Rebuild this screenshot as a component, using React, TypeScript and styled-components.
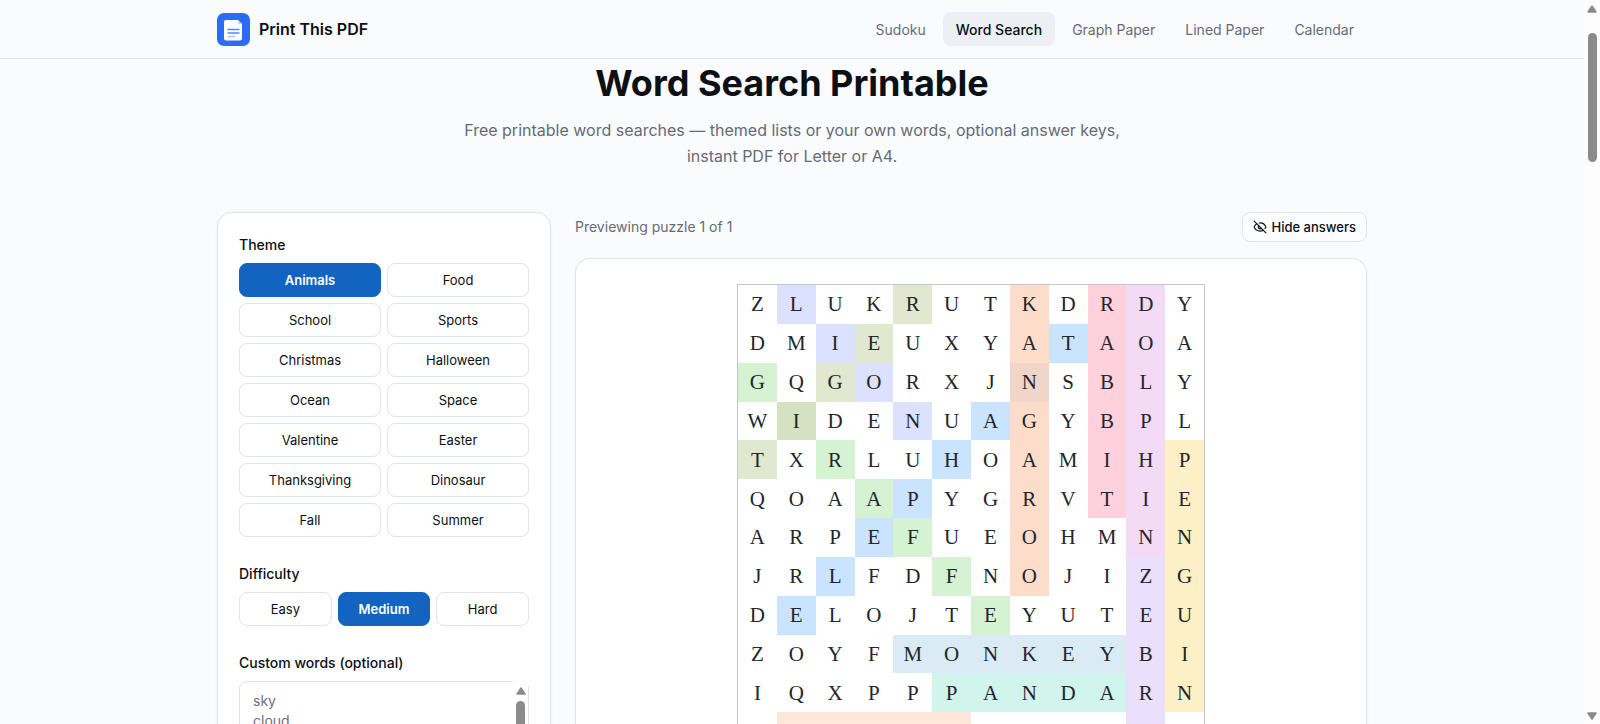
import React, { useState } from "react";
import styled, { createGlobalStyle, css } from "styled-components";
import { EyeOff } from "lucide-react";

const GlobalStyle = createGlobalStyle`
  *, *::before, *::after { box-sizing: border-box; }
  body {
    margin: 0;
    background: #fafbfd;
    color: #0c0f14;
    font-family: Inter, "Liberation Sans", sans-serif;
  }
  button, textarea { font: inherit; color: inherit; }
`;

const Shell = styled.div`
  display: flex;
  height: 100vh;
  overflow: hidden;
`;

const Page = styled.div`
  flex: 1;
  min-width: 0;
`;

const ScrollTrack = styled.div<{ $fill?: string }>`
  display: flex;
  flex-direction: column;
  align-items: center;
  flex: none;
  background: ${(p) => p.$fill ?? "transparent"};
`;

const PageTrack = styled(ScrollTrack)`
  width: 16px;
  padding: 5px 0 4px;
`;

const FieldTrack = styled(ScrollTrack)`
  position: absolute;
  top: 0;
  right: 1px;
  bottom: 1px;
  width: 15px;
  padding-top: 6px;
`;

const Thumb = styled.div<{ $height: number; $gap: number }>`
  width: 9px;
  height: ${(p) => p.$height}px;
  margin-top: ${(p) => p.$gap}px;
  border-radius: 5px;
  background: #8b8b8b;
`;

const DownArrow = styled.div`
  display: flex;
  margin-top: auto;
`;

const Container = styled.div`
  width: 100%;
  max-width: 1182px;
  margin: 0 auto;
  padding: 0 16px;
`;

const Header = styled.header`
  border-bottom: 1px solid #e1e5ea;
`;

const HeaderRow = styled(Container)`
  display: flex;
  align-items: center;
  justify-content: space-between;
  height: 58px;
`;

const Brand = styled.a`
  display: flex;
  align-items: center;
  gap: 9px;
  color: #0c0f14;
  font-size: 16px;
  font-weight: 600;
  line-height: 24px;
  text-decoration: none;
`;

const Nav = styled.nav`
  display: flex;
  gap: 4px;
`;

const NavLink = styled.a<{ $active?: boolean }>`
  padding: 7px 13px 6px;
  border-radius: 8px;
  font-size: 14px;
  line-height: 21px;
  text-decoration: none;
  color: #656b75;
  ${(p) =>
    p.$active &&
    css`
      background: #ecf0f5;
      color: #0c0f14;
      font-weight: 500;
    `}
`;

const Hero = styled.section`
  padding: 4px 0 43px;
  text-align: center;
`;

const Title = styled.h1`
  margin: 0;
  font-size: 36px;
  font-weight: 700;
  line-height: 40px;
`;

const Lead = styled.p`
  max-width: 680px;
  margin: 14px auto 0;
  color: #656b75;
  font-size: 16px;
  line-height: 26px;
`;

const Columns = styled.div`
  display: grid;
  grid-template-columns: 334px minmax(0, 1fr);
  gap: 24px;
  align-items: start;
`;

const Card = styled.div`
  border: 1px solid #dfe3e8;
  border-radius: 15px;
  background: #fff;
  box-shadow: 0 1px 3px rgba(15, 23, 42, 0.06);
`;

const Settings = styled(Card)`
  display: flex;
  flex-direction: column;
  gap: 26px;
  padding: 21px 21px 40px;
`;

const Field = styled.div`
  display: flex;
  flex-direction: column;
  gap: 8px;
`;

const Label = styled.label`
  font-size: 14px;
  font-weight: 500;
  line-height: 21px;
`;

const Options = styled.div<{ $columns: number }>`
  display: grid;
  grid-template-columns: repeat(${(p) => p.$columns}, 1fr);
  gap: 6px;
`;

const Option = styled.button<{ $selected: boolean }>`
  height: 34px;
  padding: 0;
  border: 1px solid ${(p) => (p.$selected ? "#1264c0" : "#e0e4e8")};
  border-radius: 8px;
  background: ${(p) => (p.$selected ? "#1264c0" : "#fff")};
  color: ${(p) => (p.$selected ? "#fff" : "#0c0f14")};
  font-size: 13px;
  font-weight: ${(p) => (p.$selected ? 600 : 400)};
  line-height: 18px;
`;

const WordsBox = styled.div`
  position: relative;
`;

const Words = styled.textarea`
  display: block;
  width: 100%;
  height: 120px;
  padding: 9px 26px 9px 13px;
  overflow: hidden;
  resize: none;
  border: 1px solid #dfe3e8;
  border-radius: 8px;
  background: #fff;
  font-size: 14px;
  line-height: 20px;
  &::placeholder { color: #6c727c; opacity: 1; }
`;

const PreviewBar = styled.div`
  display: flex;
  align-items: center;
  justify-content: space-between;
  margin-bottom: 16px;
`;

const PreviewText = styled.p`
  margin: 0;
  color: #656b75;
  font-size: 14px;
  line-height: 20px;
`;

const AnswersButton = styled.button`
  display: flex;
  align-items: center;
  gap: 4px;
  height: 30px;
  padding: 0 10px;
  border: 1px solid #e0e4e8;
  border-radius: 8px;
  background: #fcfdfe;
  font-size: 13px;
  font-weight: 500;
`;

const Preview = styled(Card)`
  padding: 25px 24px 40px;
`;

const Puzzle = styled.div`
  display: grid;
  grid-template-columns: repeat(12, 1fr);
  width: 100%;
  max-width: 468px;
  margin: 0 auto;
  border: 1px solid #c4c6c9;
`;

const Cell = styled.div<{ $fill?: string }>`
  display: flex;
  align-items: center;
  justify-content: center;
  aspect-ratio: 1;
  background: ${(p) => p.$fill ?? "transparent"};
  color: #24262b;
  font-family: "Liberation Serif", serif;
  font-size: 21px;
  line-height: 24px;
`;

const THEMES = [
  "Animals", "Food", "School", "Sports", "Christmas", "Halloween", "Ocean",
  "Space", "Valentine", "Easter", "Thanksgiving", "Dinosaur", "Fall", "Summer",
];
const LEVELS = ["Easy", "Medium", "Hard"];

const LETTERS = [
  "ZLUKRUTKDRDY",
  "DMIEUXYATAOA",
  "GQGORXJNSBLY",
  "WIDENUAGYBPL",
  "TXRLUHOAMIHP",
  "QOAAPYGRVTIE",
  "ARPEFUEOHMNN",
  "JRLFDFNOJIZG",
  "DELOJTEYUTEU",
  "ZOYFMONKEYBI",
  "IQXPPPANDARN",
  "            ",
];

/* Key letters name the answer that covers each square. */
const ANSWERS = [
  ".l..t..k.rd.",
  "..lt...kerd.",
  "g.tl...n.rd.",
  ".i..l.ek.rd.",
  "t.g..e.k.rdp",
  "...ge..k.rdp",
  "...eg..k..dp",
  "..e..g.k..zp",
  ".e....g...zp",
  "....mmmmmmzp",
  ".....aaaaazp",
  ".hhhhh....z.",
];

const FILLS: Record<string, string> = {
  l: "#dce1ff",
  t: "#e1e8cf",
  i: "#d5e1c0",
  g: "#d5f2d3",
  e: "#cae4ff",
  k: "#fedcca",
  n: "#f0d5c9",
  r: "#ffd1dc",
  d: "#f3dbf5",
  z: "#eae0fd",
  p: "#fdf0c6",
  m: "#daebf5",
  a: "#d1f5ed",
  h: "#ffe7d9",
};

const Logo = () => (
  <svg width="33" height="33" viewBox="0 0 33 33" aria-hidden="true">
    <rect width="33" height="33" rx="7" fill="#2a6df0" />
    <path d="M9 7h12l4 4v14.500a2 2 0 0 1-2 2H9a2 2 0 0 1-2-2V9a2 2 0 0 1 2-2Z" fill="#fff" />
    <path d="M21 7l4 4h-3a1 1 0 0 1-1-1Z" fill="#bcd2fb" />
    <path d="M11 16.500h11M11 20h11" stroke="#5a86f2" strokeWidth="1.300" strokeLinecap="round" />
    <path d="M11 23.500h7" stroke="#a9c0f8" strokeWidth="1.300" strokeLinecap="round" />
  </svg>
);

const Arrow = ({ down = false }: { down?: boolean }) => (
  <svg width="10" height="8" viewBox="0 0 10 8" aria-hidden="true">
    <path
      d={down ? "M1 1h8L5 7Z" : "M1 7h8L5 1Z"}
      fill="#8b8b8b"
      stroke="#8b8b8b"
      strokeWidth="1.500"
      strokeLinejoin="round"
    />
  </svg>
);

export default function App() {
  const [theme, setTheme] = useState("Animals");
  const [level, setLevel] = useState("Medium");
  const [answers, setAnswers] = useState(true);

  return (
    <>
      <GlobalStyle />
      <Shell>
        <Page>
          <Header>
            <HeaderRow>
              <Brand href="#">
                <Logo />
                Print This PDF
              </Brand>
              <Nav>
                <NavLink href="#sudoku">Sudoku</NavLink>
                <NavLink href="#word-search" $active>Word Search</NavLink>
                <NavLink href="#graph-paper">Graph Paper</NavLink>
                <NavLink href="#lined-paper">Lined Paper</NavLink>
                <NavLink href="#calendar">Calendar</NavLink>
              </Nav>
            </HeaderRow>
          </Header>
          <Container as="main">
            <Hero>
              <Title>Word Search Printable</Title>
              <Lead>
                Free printable word searches — themed lists or your own words, optional answer keys,
                instant PDF for Letter or A4.
              </Lead>
            </Hero>
            <Columns>
              <Settings>
                <Field role="group" aria-labelledby="theme-label">
                  <Label as="span" id="theme-label">Theme</Label>
                  <Options $columns={2}>
                    {THEMES.map((name) => (
                      <Option key={name} type="button" $selected={name === theme} onClick={() => setTheme(name)}>
                        {name}
                      </Option>
                    ))}
                  </Options>
                </Field>
                <Field role="group" aria-labelledby="level-label">
                  <Label as="span" id="level-label">Difficulty</Label>
                  <Options $columns={3}>
                    {LEVELS.map((name) => (
                      <Option key={name} type="button" $selected={name === level} onClick={() => setLevel(name)}>
                        {name}
                      </Option>
                    ))}
                  </Options>
                </Field>
                <Field>
                  <Label htmlFor="words">Custom words (optional)</Label>
                  <WordsBox>
                    <Words id="words" placeholder={"sky\ncloud"} />
                    <FieldTrack $fill="#fff" aria-hidden="true">
                      <Arrow />
                      <Thumb $height={60} $gap={6} />
                    </FieldTrack>
                  </WordsBox>
                </Field>
              </Settings>
              <section>
                <PreviewBar>
                  <PreviewText>Previewing puzzle 1 of 1</PreviewText>
                  <AnswersButton type="button" onClick={() => setAnswers(!answers)}>
                    <EyeOff size={14} strokeWidth={2} />
                    {answers ? "Hide answers" : "Show answers"}
                  </AnswersButton>
                </PreviewBar>
                <Preview>
                  <Puzzle>
                    {LETTERS.flatMap((row, r) =>
                      [...row].map((letter, c) => (
                        <Cell key={`${r}-${c}`} $fill={answers ? FILLS[ANSWERS[r][c]] : undefined}>
                          {letter}
                        </Cell>
                      ))
                    )}
                  </Puzzle>
                </Preview>
              </section>
            </Columns>
          </Container>
        </Page>
        <PageTrack $fill="#fdfdfe" aria-hidden="true">
          <Arrow />
          <Thumb $height={129} $gap={20} />
          <DownArrow>
            <Arrow down />
          </DownArrow>
        </PageTrack>
      </Shell>
    </>
  );
}
